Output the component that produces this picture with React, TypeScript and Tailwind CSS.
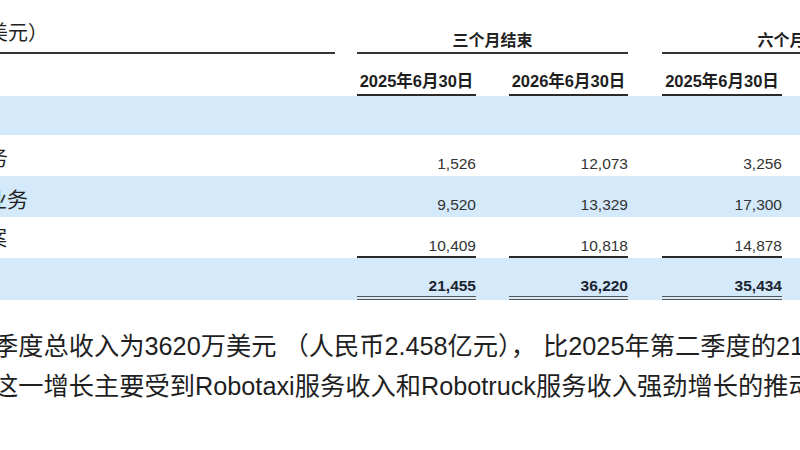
const FONT = "font-['Liberation_Sans','Noto_Sans_CJK_SC',sans-serif]";

const COLS = ["w-[119px]", "w-[119px] ml-[33px]", "w-[120px] ml-[34px]", "w-[120px] ml-[33px]"];

type Row = {
  label: string;
  labelCls: string;
  values: string[];
  rowCls: string;
  cellCls: string;
};

const rows: Row[] = [
  {
    label: "服务",
    labelCls: "ml-[-34px] pt-[12px]",
    values: ["1,526", "12,073", "3,256", "15,329"],
    rowCls: "h-[41px] bg-white",
    cellCls: "pt-[21px] text-[#333]",
  },
  {
    label: "业务",
    labelCls: "ml-[-14px] pt-[13px]",
    values: ["9,520", "13,329", "17,300", "25,411"],
    rowCls: "h-[41px] bg-[#d4e9fa]",
    cellCls: "pt-[21px] text-[#333]",
  },
  {
    label: "方案",
    labelCls: "ml-[-35px] pt-[10px]",
    values: ["10,409", "10,818", "14,878", "21,227"],
    rowCls: "h-[41px] bg-white",
    cellCls: "pt-[21px] text-[#333] border-b-2 border-[#2a2a2a]",
  },
  {
    label: "",
    labelCls: "",
    values: ["21,455", "36,220", "35,434", "61,967"],
    rowCls: "h-[42px] bg-[#d4e9fa]",
    cellCls: "pt-[20px] font-bold text-[#1c2431] border-b-4 border-double border-[#555]",
  },
];

export default function App() {
  return (
    <div className={`w-[800px] h-[450px] overflow-hidden bg-white ${FONT}`}>
      {/* column groups */}
      <div className="flex h-[54px] whitespace-nowrap">
        <div className="w-[335px] shrink-0 flex items-end pb-[9px] border-b-2 border-[#333]">
          <span className="ml-[-52px] text-[20px] leading-none text-[#222]">（千美元）</span>
        </div>
        <div className="w-[271px] shrink-0 ml-[22px] flex items-end justify-center pb-[3px] border-b-2 border-[#333]">
          <span className="text-[16px] leading-none font-bold text-[#222]">三个月结束</span>
        </div>
        <div className="w-[271px] shrink-0 ml-[34px] flex items-end justify-center pb-[3px] border-b-2 border-[#333]">
          <span className="text-[16px] leading-none font-bold text-[#222]">六个月结束</span>
        </div>
      </div>

      {/* dates */}
      <div className="flex h-[42px] whitespace-nowrap">
        <div className="w-[357px] shrink-0" />
        {["2025年6月30日", "2026年6月30日", "2025年6月30日", "2026年6月30日"].map((d, i) => (
          <div
            key={i}
            className={`${COLS[i]} shrink-0 flex items-end justify-center pb-[5px] border-b-2 border-[#2a2a2a] text-[16.5px] leading-none font-bold text-[#1e1e1e]`}
          >
            {d}
          </div>
        ))}
      </div>

      <div className="h-[39px] bg-[#d4e9fa]" />

      {rows.map((r, ri) => (
        <div key={ri} className={`flex whitespace-nowrap ${r.rowCls}`}>
          <div className="w-[357px] shrink-0 overflow-hidden">
            <div className={`text-[21px] leading-none text-[#222] ${r.labelCls}`}>{r.label}</div>
          </div>
          {r.values.map((v, i) => (
            <div key={i} className={`${COLS[i]} shrink-0 text-right text-[15.5px] leading-none ${r.cellCls}`}>
              {v}
            </div>
          ))}
        </div>
      ))}

      {/* commentary */}
      <div className="mt-[26px] ml-[-7px] whitespace-nowrap text-[25.25px] leading-[40px] text-[#1f1f1f]">
        <p>季度总收入为3620万美元 （人民币2.458亿元）， 比2025年第二季度的2145.5万美元增长68.8%。</p>
        <p>这一增长主要受到Robotaxi服务收入和Robotruck服务收入强劲增长的推动。</p>
      </div>
    </div>
  );
}
